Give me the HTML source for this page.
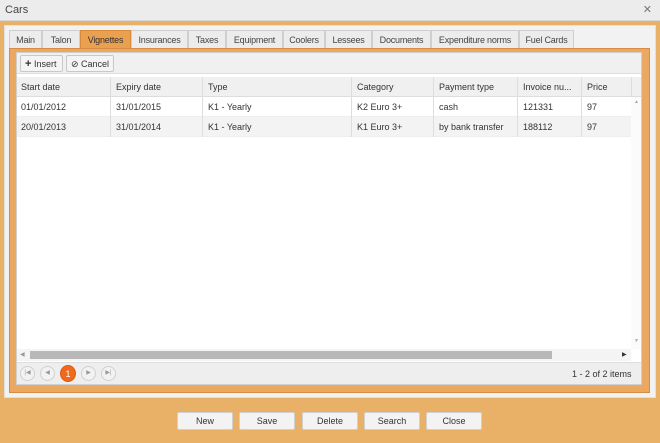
<!DOCTYPE html>
<html><head><style>
*{box-sizing:border-box;margin:0;padding:0}
body{width:660px;height:443px;background:#e9b068;font-family:"Liberation Sans",sans-serif;font-size:9px;color:#333;position:relative;overflow:hidden}
.abs{position:absolute;white-space:nowrap}
.title{left:0;top:0;width:660px;height:21px;background:#ececec;border-bottom:1px solid #d8d8d8;font-size:11px;padding:4px 5px;color:#444}
.x{right:8px;top:3px;font-size:11px;color:#777}
.panel{left:4px;top:25px;width:652px;height:373px;background:#f2f2f2;border:1px solid #e0e0e0}
.tab{top:30px;height:19px;background:#ececec;border:1px solid #cfcfcf;border-bottom:none;padding:4px 0 0;text-align:center;color:#444;letter-spacing:-0.2px}
.tab.sel{background:#eaa04f;border-color:#d98a3a;color:#333;height:20px}
.content{left:9px;top:48px;width:641px;height:345px;background:#eba862;border:1px solid #d98c40}
.grid{left:16px;top:52px;width:626px;height:333px;background:#fff;border:1px solid #cfcfcf}
.tb{left:17px;top:53px;width:624px;height:21px;background:#f0f0f0;border-bottom:1px solid #ddd}
.btn{top:55px;height:17px;background:#f4f4f4;border:1px solid #c8c8c8;border-radius:2px;padding:3px 4px;color:#333;overflow:hidden}
.hdr{left:17px;top:77px;width:624px;height:20px;background:#f0f0f0;border-bottom:1px solid #ddd}
.c{position:absolute;padding:5px 5px;white-space:nowrap;border-left:1px solid #ddd;height:20px}
.row{position:absolute;left:17px;width:614px;height:20px;border-bottom:1px solid #eee}
.hs{left:17px;top:349px;width:614px;height:12px;background:#f4f4f4}
.thumb{left:30px;top:351px;width:522px;height:8px;background:#b8b8b8}
.pager{left:17px;top:362px;width:624px;height:22px;background:#eeeeee;border-top:1px solid #ddd}
.pb{top:366px;width:15px;height:15px;border:1px solid #d0d0d0;border-radius:50%;background:#f2f2f2;color:#999;font-size:6px;text-align:center;line-height:13px}
.bb{top:412px;width:56px;height:18px;background:#f3f3f3;border:1px solid #d0d0d0;border-radius:2px;text-align:center;line-height:16px;color:#333}
</style></head><body>
<div class="abs title">Cars</div><div class="abs x">✕</div>
<div class="abs panel"></div>
<div class="abs tab" style="left:9px;width:33px">Main</div>
<div class="abs tab" style="left:42px;width:38px">Talon</div>
<div class="abs tab sel" style="left:80px;width:51px">Vignettes</div>
<div class="abs tab" style="left:131px;width:57px">Insurances</div>
<div class="abs tab" style="left:188px;width:38px">Taxes</div>
<div class="abs tab" style="left:226px;width:57px">Equipment</div>
<div class="abs tab" style="left:283px;width:42px">Coolers</div>
<div class="abs tab" style="left:325px;width:47px">Lessees</div>
<div class="abs tab" style="left:372px;width:59px">Documents</div>
<div class="abs tab" style="left:431px;width:88px">Expenditure norms</div>
<div class="abs tab" style="left:519px;width:55px">Fuel Cards</div>
<div class="abs content"></div>
<div class="abs grid"></div>
<div class="abs tb"></div>
<div class="abs btn" style="left:20px;width:43px"><b style="font-size:11px;line-height:8px">+</b> Insert</div>
<div class="abs btn" style="left:66px;width:48px">⊘ Cancel</div>
<div class="abs hdr">
<div class="c" style="left:-1px;border:none">Start date</div>
<div class="c" style="left:93px">Expiry date</div>
<div class="c" style="left:185px">Type</div>
<div class="c" style="left:334px">Category</div>
<div class="c" style="left:416px">Payment type</div>
<div class="c" style="left:500px">Invoice nu...</div>
<div class="c" style="left:564px">Price</div>
<div class="c" style="left:614px"></div>
</div>
<div class="row" style="top:97px;background:#fff">
<div class="c" style="left:-1px;border:none">01/01/2012</div><div class="c" style="left:93px">31/01/2015</div><div class="c" style="left:185px">K1 - Yearly</div><div class="c" style="left:334px">K2 Euro 3+</div><div class="c" style="left:416px">cash</div><div class="c" style="left:500px">121331</div><div class="c" style="left:564px">97</div></div>
<div class="row" style="top:117px;background:#f3f3f3">
<div class="c" style="left:-1px;border:none">20/01/2013</div><div class="c" style="left:93px">31/01/2014</div><div class="c" style="left:185px">K1 - Yearly</div><div class="c" style="left:334px">K1 Euro 3+</div><div class="c" style="left:416px">by bank transfer</div><div class="c" style="left:500px">188112</div><div class="c" style="left:564px">97</div></div>
<div class="abs" style="left:631px;top:97px;width:10px;height:252px;background:#fbfbfb"></div>
<div class="abs" style="left:634px;top:99px;font-size:5px;color:#aaa">▲</div>
<div class="abs" style="left:634px;top:338px;font-size:5px;color:#aaa">▼</div>
<div class="abs hs"></div><div class="abs thumb"></div>
<div class="abs" style="left:20px;top:351px;font-size:6px;color:#999">◀</div>
<div class="abs" style="left:622px;top:351px;font-size:6px;color:#333">▶</div>
<div class="abs pager"></div>
<div class="abs pb" style="left:20px">|◀</div>
<div class="abs pb" style="left:40px">◀</div>
<div class="abs pb" style="left:60px;background:#ef6a1d;border-color:#e05a10;color:#fff;font-size:9px;width:16px;height:17px;top:365px;line-height:16px">1</div>
<div class="abs pb" style="left:81px">▶</div>
<div class="abs pb" style="left:101px">▶|</div>
<div class="abs" style="left:572px;top:369px;color:#333">1 - 2 of 2 items</div>
<div class="abs bb" style="left:177px">New</div>
<div class="abs bb" style="left:239px">Save</div>
<div class="abs bb" style="left:302px">Delete</div>
<div class="abs bb" style="left:364px">Search</div>
<div class="abs bb" style="left:426px">Close</div>
</body></html>
